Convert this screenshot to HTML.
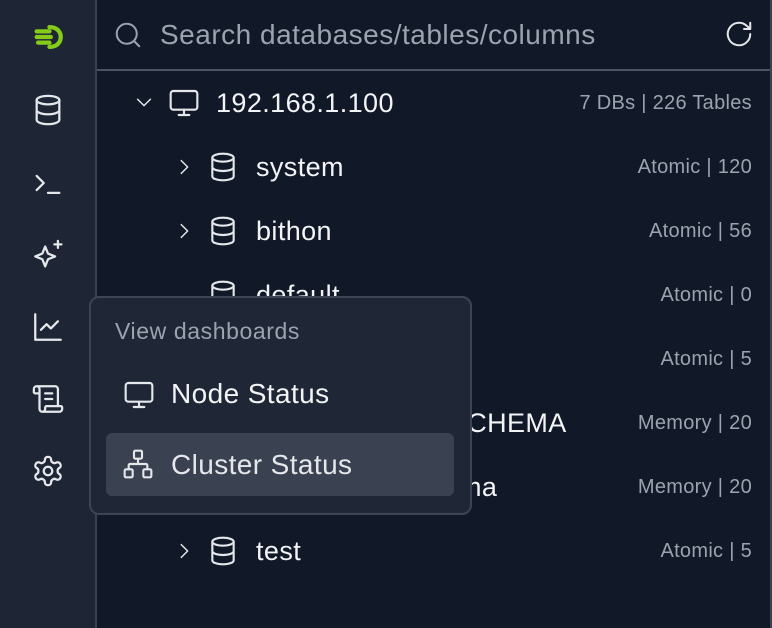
<!DOCTYPE html><html><head><style>
body{margin:0;width:772px;height:628px;background:#111827;font-family:"Liberation Sans",sans-serif;overflow:hidden;position:relative}
.side{position:absolute;left:0;top:0;width:95px;height:628px;background:#1e2535;border-right:2px solid #3a4150}
.ic{position:absolute;left:31px;width:34px;height:34px}
svg{fill:none;stroke:#e5e7eb;stroke-width:1.6;stroke-linecap:round;stroke-linejoin:round}
.hdr{position:absolute;left:97px;top:0;right:2px;height:69px;border-bottom:2px solid #4b5563}
.rb{position:absolute;right:0;top:0;width:2px;height:628px;background:#3a4150}
.row{position:absolute;left:0;right:18px;height:40px}
.t{position:absolute;color:#f3f4f6;font-size:27px;letter-spacing:0.4px;top:5px}
.r{position:absolute;right:0;color:#9ca3af;font-size:20px;letter-spacing:0.3px;top:9px}
.pop{position:absolute;left:89px;top:296px;width:379px;height:215px;background:#1f2737;border:2px solid #3d4554;border-radius:10px}
</style></head><body>
<div class="side">
<svg class="ic" style="top:20px" viewBox="0 0 24 24"><g stroke="#84cc16" stroke-width="3"><path d="M4 8h9M4 12h10M5 16h8"/><path d="M13 5c6 0 8 4 8 7s-2 7-8 7" /></g></svg>
<svg class="ic" style="top:93px" viewBox="0 0 24 24"><ellipse cx="12" cy="5" rx="8" ry="3"/><path d="M4 5v14c0 1.7 3.6 3 8 3s8-1.3 8-3V5M4 12c0 1.7 3.6 3 8 3s8-1.3 8-3"/></svg>
<svg class="ic" style="top:166px" viewBox="0 0 24 24"><path d="M4 7l5 5-5 5M12 19h8"/></svg>
<svg class="ic" style="top:238px" viewBox="0 0 24 24"><path d="M10 6l2 5 5 2-5 2-2 5-2-5-5-2 5-2zM19 2v5M16.5 4.5h5"/></svg>
<svg class="ic" style="top:310px" viewBox="0 0 24 24"><path d="M3 3v18h18M7 14l4-4 3 3 5-5"/></svg>
<svg class="ic" style="top:382px" viewBox="0 0 24 24"><path d="M15 12h-5M15 8h-5M19 17V5a2 2 0 0 0-2-2H4M8 21h12a2 2 0 0 0 2-2v-1a1 1 0 0 0-1-1H11a1 1 0 0 0-1 1v1a2 2 0 1 1-4 0V5a2 2 0 1 0-4 0v2a1 1 0 0 0 1 1h3"/></svg>
<svg class="ic" style="top:454px" viewBox="0 0 24 24"><circle cx="12" cy="12" r="3"/><path d="M12.2 2h-.4a2 2 0 0 0-2 2v.2a2 2 0 0 1-1 1.7l-.4.3a2 2 0 0 1-2 0l-.2-.1a2 2 0 0 0-2.7.7l-.2.4a2 2 0 0 0 .7 2.7l.2.1a2 2 0 0 1 1 1.7v.5a2 2 0 0 1-1 1.8l-.2.1a2 2 0 0 0-.7 2.7l.2.4a2 2 0 0 0 2.7.7l.2-.1a2 2 0 0 1 2 0l.4.3a2 2 0 0 1 1 1.7V20a2 2 0 0 0 2 2h.4a2 2 0 0 0 2-2v-.2a2 2 0 0 1 1-1.7l.4-.3a2 2 0 0 1 2 0l.2.1a2 2 0 0 0 2.7-.7l.2-.4a2 2 0 0 0-.7-2.7l-.2-.1a2 2 0 0 1-1-1.8v-.5a2 2 0 0 1 1-1.7l.2-.1a2 2 0 0 0 .7-2.7l-.2-.4a2 2 0 0 0-2.7-.7l-.2.1a2 2 0 0 1-2 0l-.4-.3a2 2 0 0 1-1-1.7V4a2 2 0 0 0-2-2z"/></svg>
</div>
<div class="hdr">
<svg style="position:absolute;left:16px;top:20px;width:30px;height:30px;stroke:#9ca3af" viewBox="0 0 24 24"><circle cx="11" cy="11" r="8"/><path d="M21 21l-4.3-4.3"/></svg>
<div style="position:absolute;left:63px;top:19px;font-size:28px;letter-spacing:0.5px;color:#9ca3af">Search databases/tables/columns</div>
<svg style="position:absolute;right:16px;top:19px;width:30px;height:30px" viewBox="0 0 24 24"><path d="M21 12a9 9 0 1 1-3-6.7L21 8M21 3v5h-5"/></svg>
</div>
<div class="rb"></div>
<div style="position:absolute;left:97px;top:0;width:673px;height:628px">
<div class="row" style="top:83px"><svg style="position:absolute;left:36px;top:8px;width:22px;height:22px" viewBox="0 0 24 24"><path d="M5 9l7 7 7-7"/></svg><svg style="position:absolute;left:70px;top:4px;width:34px;height:32px" viewBox="0 0 24 24"><rect x="2" y="3" width="20" height="14" rx="2"/><path d="M8 21h8M12 17v4"/></svg><span class="t" style="left:119px">192.168.1.100</span><span class="r">7 DBs | 226 Tables</span></div>
<div class="row" style="top:147px"><svg style="position:absolute;left:76px;top:9px;width:22px;height:22px" viewBox="0 0 24 24"><path d="M9 5l7 7-7 7"/></svg><svg style="position:absolute;left:110px;top:4px;width:32px;height:32px" viewBox="0 0 24 24"><ellipse cx="12" cy="5" rx="8" ry="3"/><path d="M4 5v14c0 1.7 3.6 3 8 3s8-1.3 8-3V5M4 12c0 1.7 3.6 3 8 3s8-1.3 8-3"/></svg><span class="t" style="left:159px">system</span><span class="r">Atomic | 120</span></div>
<div class="row" style="top:211px"><svg style="position:absolute;left:76px;top:9px;width:22px;height:22px" viewBox="0 0 24 24"><path d="M9 5l7 7-7 7"/></svg><svg style="position:absolute;left:110px;top:4px;width:32px;height:32px" viewBox="0 0 24 24"><ellipse cx="12" cy="5" rx="8" ry="3"/><path d="M4 5v14c0 1.7 3.6 3 8 3s8-1.3 8-3V5M4 12c0 1.7 3.6 3 8 3s8-1.3 8-3"/></svg><span class="t" style="left:159px">bithon</span><span class="r">Atomic | 56</span></div>
<div class="row" style="top:275px"><svg style="position:absolute;left:110px;top:4px;width:32px;height:32px" viewBox="0 0 24 24"><ellipse cx="12" cy="5" rx="8" ry="3"/><path d="M4 5v14c0 1.7 3.6 3 8 3s8-1.3 8-3V5"/></svg><span class="t" style="left:159px">default</span><span class="r">Atomic | 0</span></div>
<div class="row" style="top:339px"><span class="r">Atomic | 5</span></div>
<div class="row" style="top:403px"><span class="t" style="left:145px">INFORMATION_SCHEMA</span><span class="r">Memory | 20</span></div>
<div class="row" style="top:467px"><span class="t" style="left:150px">information_schema</span><span class="r">Memory | 20</span></div>
<div class="row" style="top:531px"><svg style="position:absolute;left:76px;top:9px;width:22px;height:22px" viewBox="0 0 24 24"><path d="M9 5l7 7-7 7"/></svg><svg style="position:absolute;left:110px;top:4px;width:32px;height:32px" viewBox="0 0 24 24"><ellipse cx="12" cy="5" rx="8" ry="3"/><path d="M4 5v14c0 1.7 3.6 3 8 3s8-1.3 8-3V5M4 12c0 1.7 3.6 3 8 3s8-1.3 8-3"/></svg><span class="t" style="left:159px">test</span><span class="r">Atomic | 5</span></div>
</div>
<div class="pop">
<div style="position:absolute;left:24px;top:20px;font-size:23px;letter-spacing:0.6px;color:#9ca3af">View dashboards</div>
<svg style="position:absolute;left:31px;top:81px;width:34px;height:32px" viewBox="0 0 24 24"><rect x="2" y="3" width="20" height="14" rx="2"/><path d="M8 21h8M12 17v4"/></svg>
<div style="position:absolute;left:80px;top:80px;font-size:28px;letter-spacing:0.4px;color:#f3f4f6">Node Status</div>
<div style="position:absolute;left:15px;top:135px;width:348px;height:63px;background:#3a4150;border-radius:6px">
<svg style="position:absolute;left:16px;top:15px;width:32px;height:32px" viewBox="0 0 24 24"><rect x="9" y="2" width="6" height="6" rx="1"/><rect x="2" y="16" width="6" height="6" rx="1"/><rect x="16" y="16" width="6" height="6" rx="1"/><path d="M5 16v-3a1 1 0 0 1 1-1h12a1 1 0 0 1 1 1v3M12 12V8"/></svg>
<div style="position:absolute;left:65px;top:16px;font-size:28px;letter-spacing:0.4px;color:#e5e7eb">Cluster Status</div>
</div>
</div>
</body></html>
